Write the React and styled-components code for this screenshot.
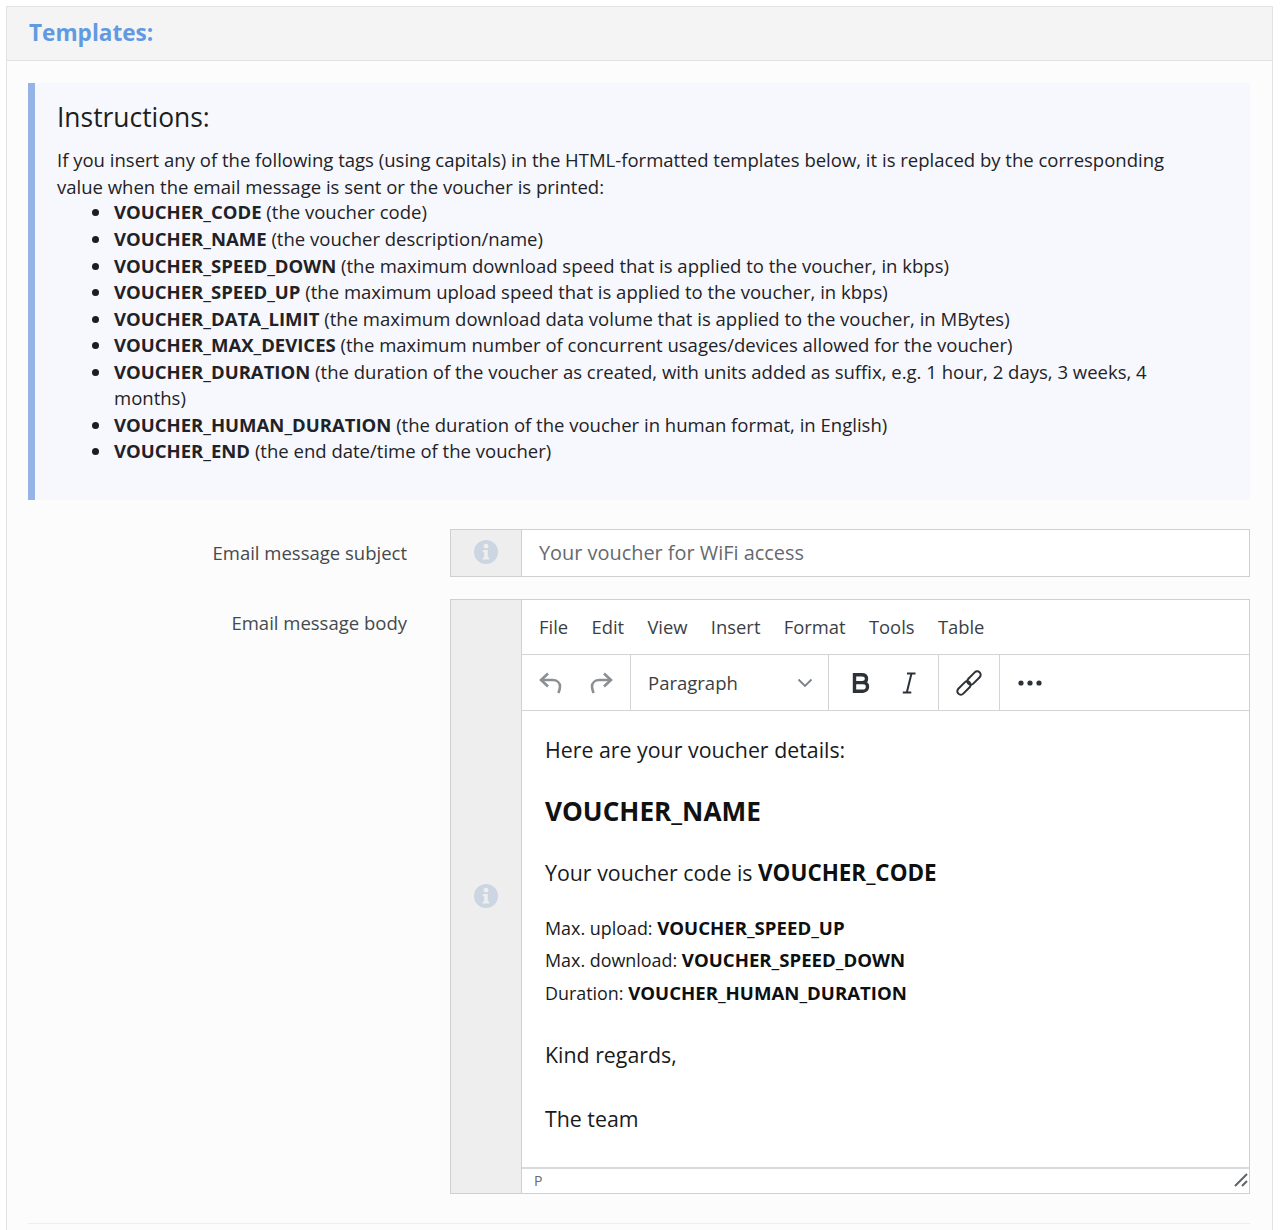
import React from "react";
import styled, { createGlobalStyle } from "styled-components";

const GlobalStyle = createGlobalStyle`
  html, body {
    margin: 0;
    padding: 0;
    background: #fff;
    height: 1230px;
    overflow: hidden;
  }
  body {
    font-family: "Open Sans", "Liberation Sans", sans-serif;
    color: #212529;
  }
`;

const Page = styled.div`
  padding: 6px 7px 0 6px;
`;

const Panel = styled.section`
  height: 1224px;
  box-sizing: border-box;
  border: 1px solid #e3e3e3;
  border-bottom: 0;
  background: #fcfcfc;
`;

const PanelHeader = styled.header`
  height: 54px;
  box-sizing: border-box;
  padding: 0 22px 2px;
  display: flex;
  align-items: center;
  background: #f4f4f4;
  border-bottom: 1px solid #e3e3e3;
  font-size: 22.6px;
  font-weight: 700;
  color: #629ae2;
`;

const PanelBody = styled.div`
  padding: 22px 22px 0 21px;
`;

const Callout = styled.div`
  height: 417px;
  box-sizing: border-box;
  padding: 16px 60px 0 22px;
  background: #f6f8fd;
  border-left: 7px solid #96b3e6;
  font-size: 18.53px;
  line-height: 26.55px;
  color: #1f2226;
`;

const CalloutTitle = styled.h4`
  margin: 0 0 12px;
  font-size: 26.4px;
  line-height: 36px;
  font-weight: 400;
  color: #1b1d20;
`;

const Intro = styled.p`
  margin: 0;
`;

const TagList = styled.ul`
  margin: -0.7px 0 0;
  padding: 0 0 0 57px;
  list-style: none;
`;

const TagItem = styled.li`
  position: relative;

  &::before {
    content: "";
    position: absolute;
    left: -22px;
    top: 10px;
    width: 7px;
    height: 7px;
    border-radius: 50%;
    background: #1b1d20;
  }
`;

const FormRow = styled.div`
  display: flex;
  margin-top: ${(p) => p.$top}px;
`;

const Label = styled.label`
  width: 379px;
  flex: none;
  text-align: right;
  font-size: 18.5px;
  line-height: 26px;
  color: #45494e;
  padding-top: ${(p) => p.$top}px;
`;

const Field = styled.div`
  margin-left: 43px;
  width: 800px;
  flex: none;
  display: flex;
  box-sizing: border-box;
  border: 1px solid #ced0d2;
  height: ${(p) => p.$height}px;
  background: #fff;
`;

const Addon = styled.div`
  width: 70px;
  flex: none;
  box-sizing: content-box;
  display: flex;
  align-items: center;
  justify-content: center;
  padding-bottom: 2px;
  background: #eeeeee;
  border-right: 1px solid #ced0d2;
`;

const SubjectValue = styled.div`
  flex: 1;
  padding-left: 17px;
  font-size: 19.9px;
  line-height: 46px;
  color: #65696e;
`;

const Editor = styled.div`
  flex: 1;
  min-width: 0;
  display: flex;
  flex-direction: column;
`;

const MenuBar = styled.div`
  height: 55px;
  flex: none;
  box-sizing: border-box;
  display: flex;
  align-items: center;
  gap: 23.3px;
  padding: 0 0 2px 17px;
  font-size: 18.4px;
  color: #3a3f45;
  border-bottom: 1px solid #d2d4d6;
`;

const ToolBar = styled.div`
  height: 56px;
  flex: none;
  box-sizing: border-box;
  display: flex;
  border-bottom: 1px solid #d2d4d6;
`;

const ToolGroup = styled.div`
  width: ${(p) => p.$width}px;
  flex: none;
  box-sizing: border-box;
  display: flex;
  align-items: center;
  justify-content: ${(p) => p.$justify || "center"};
  gap: ${(p) => p.$gap || 0}px;
  border-right: ${(p) => (p.$last ? "0" : "1px solid #d2d4d6")};
  padding: ${(p) => p.$padding || "0"};
  font-size: 18.5px;
  color: #3a3f45;
`;

const Content = styled.div`
  flex: 1;
  padding: 24px 0 0 23px;
  font-size: 21.35px;
  color: #181a1c;
`;

const ContentLine = styled.p`
  margin: 0 0 ${(p) => p.$gap}px;
  line-height: 29px;
`;

const ContentHeading = styled.h2`
  margin: 0 0 30px;
  font-size: 26.2px;
  line-height: 34px;
  font-weight: 700;
  color: #111;
`;

const Strong = styled.b`
  font-size: ${(p) => p.$scale || 1.05}em;
  color: #0e0f10;
`;

const SmallLine = styled.div`
  font-size: 17.9px;
  line-height: 32.3px;
`;

const SmallBlock = styled.div`
  margin-bottom: 31px;
`;

const StatusBar = styled.div`
  height: 26px;
  flex: none;
  box-sizing: border-box;
  border-top: 2px solid #d8dadb;
  display: flex;
  align-items: center;
  justify-content: space-between;
  padding: 0 1px 2px 12px;
  font-size: 14px;
  color: #666b70;
`;

const Divider = styled.hr`
  margin: 29px 0 0;
  border: 0;
  border-top: 1px solid #eeeeee;
`;

const InfoIcon = () => (
  <svg width="24" height="24" viewBox="0 0 24 24">
    <circle cx="12" cy="12" r="12" fill="#ccd5e2" />
    <circle cx="12" cy="6.2" r="2.4" fill="#eeeeee" />
    <path d="M8.8 10h5v7.4h1.6v2.2H8.6v-2.2h1.6v-5.2H8.8z" fill="#eeeeee" />
  </svg>
);

const UndoIcon = () => (
  <svg width="26" height="26" viewBox="0 0 26 26" fill="none" stroke="#8b9095" strokeWidth="2.6">
    <path d="M10 3.500 3 10l7 6.500" />
    <path d="M3.500 10h11c4.500 0 7.500 2.800 7.500 6.500 0 2.500-.8 4.500-1.600 6.500" />
  </svg>
);

const RedoIcon = () => (
  <svg width="26" height="26" viewBox="0 0 26 26" fill="none" stroke="#8b9095" strokeWidth="2.6">
    <path d="M16 3.500 23 10l-7 6.500" />
    <path d="M22.500 10h-11C7 10 4 12.800 4 16.500c0 2.500.8 4.500 1.600 6.500" />
  </svg>
);

const Chevron = () => (
  <svg width="16" height="10" viewBox="0 0 16 10" fill="none" stroke="#7d8288" strokeWidth="1.8">
    <path d="M1.500 1.500 8 8l6.500-6.500" />
  </svg>
);

const BoldIcon = () => (
  <svg width="18" height="20" viewBox="0 0 18 20" fill="none" stroke="#2c3238" strokeWidth="3.4">
    <path d="M2.500 1.800h7.300c3 0 4.700 1.500 4.700 3.900s-1.700 3.900-4.700 3.900H2.500zM2.500 9.600h8.300c3 0 4.700 1.600 4.700 4.100s-1.700 4.500-4.700 4.500H2.500z" />
  </svg>
);

const ItalicIcon = () => (
  <svg width="14" height="22" viewBox="0 0 14 22" fill="none" stroke="#2c3238" strokeWidth="2">
    <path d="M5 1.500h8.500M.8 20.500h8.500M9.500 1.500 4.800 20.500" />
  </svg>
);

const LinkIcon = () => (
  <svg width="28" height="28" viewBox="0 0 28 28" fill="none" stroke="#2c3238" strokeWidth="2">
    <rect x="15.500" y="1" width="7" height="16" rx="3.500" transform="rotate(45 19 9)" />
    <rect x="5.500" y="11" width="7" height="16" rx="3.500" transform="rotate(45 9 19)" />
  </svg>
);

const DotsIcon = () => (
  <svg width="24" height="6" viewBox="0 0 24 6" fill="#2c3238">
    <circle cx="3" cy="3" r="2.600" />
    <circle cx="12" cy="3" r="2.600" />
    <circle cx="21" cy="3" r="2.600" />
  </svg>
);

const ResizeGrip = () => (
  <svg width="14" height="14" viewBox="0 0 14 14" stroke="#5f6469" strokeWidth="2">
    <path d="M1 13 13 1M8 13l5-5" />
  </svg>
);

const tags = [
  ["VOUCHER_CODE", "(the voucher code)"],
  ["VOUCHER_NAME", "(the voucher description/name)"],
  ["VOUCHER_SPEED_DOWN", "(the maximum download speed that is applied to the voucher, in kbps)"],
  ["VOUCHER_SPEED_UP", "(the maximum upload speed that is applied to the voucher, in kbps)"],
  ["VOUCHER_DATA_LIMIT", "(the maximum download data volume that is applied to the voucher, in MBytes)"],
  ["VOUCHER_MAX_DEVICES", "(the maximum number of concurrent usages/devices allowed for the voucher)"],
  ["VOUCHER_DURATION", "(the duration of the voucher as created, with units added as suffix, e.g. 1 hour, 2 days, 3 weeks, 4 months)"],
  ["VOUCHER_HUMAN_DURATION", "(the duration of the voucher in human format, in English)"],
  ["VOUCHER_END", "(the end date/time of the voucher)"],
];

const menus = ["File", "Edit", "View", "Insert", "Format", "Tools", "Table"];

export default function App() {
  return (
    <>
      <GlobalStyle />
      <Page>
        <Panel>
          <PanelHeader>Templates:</PanelHeader>
          <PanelBody>
            <Callout>
              <CalloutTitle>Instructions:</CalloutTitle>
              <Intro>
                If you insert any of the following tags (using capitals) in the HTML-formatted templates below, it is
                replaced by the corresponding value when the email message is sent or the voucher is printed:
              </Intro>
              <TagList>
                {tags.map(([tag, text]) => (
                  <TagItem key={tag}>
                    <b>{tag}</b> {text}
                  </TagItem>
                ))}
              </TagList>
            </Callout>

            <FormRow $top={29}>
              <Label $top={11}>Email message subject</Label>
              <Field $height={48}>
                <Addon>
                  <InfoIcon />
                </Addon>
                <SubjectValue>Your voucher for WiFi access</SubjectValue>
              </Field>
            </FormRow>

            <FormRow $top={22}>
              <Label $top={11}>Email message body</Label>
              <Field $height={595}>
                <Addon>
                  <InfoIcon />
                </Addon>
                <Editor>
                  <MenuBar>
                    {menus.map((m) => (
                      <span key={m}>{m}</span>
                    ))}
                  </MenuBar>
                  <ToolBar>
                    <ToolGroup $width={109} $gap={24}>
                      <UndoIcon />
                      <RedoIcon />
                    </ToolGroup>
                    <ToolGroup $width={198} $justify="space-between" $padding="0 15px 0 17px">
                      <span>Paragraph</span>
                      <Chevron />
                    </ToolGroup>
                    <ToolGroup $width={110} $gap={32}>
                      <BoldIcon />
                      <ItalicIcon />
                    </ToolGroup>
                    <ToolGroup $width={61}>
                      <LinkIcon />
                    </ToolGroup>
                    <ToolGroup $width={60} $last>
                      <DotsIcon />
                    </ToolGroup>
                  </ToolBar>
                  <Content>
                    <ContentLine $gap={30}>Here are your voucher details:</ContentLine>
                    <ContentHeading>VOUCHER_NAME</ContentHeading>
                    <ContentLine $gap={25}>
                      Your voucher code is <Strong>VOUCHER_CODE</Strong>
                    </ContentLine>
                    <SmallBlock>
                      <SmallLine>
                        Max. upload: <Strong $scale={1.04}>VOUCHER_SPEED_UP</Strong>
                      </SmallLine>
                      <SmallLine>
                        Max. download: <Strong $scale={1.04}>VOUCHER_SPEED_DOWN</Strong>
                      </SmallLine>
                      <SmallLine>
                        Duration: <Strong $scale={1.04}>VOUCHER_HUMAN_DURATION</Strong>
                      </SmallLine>
                    </SmallBlock>
                    <ContentLine $gap={35}>Kind regards,</ContentLine>
                    <ContentLine $gap={0}>The team</ContentLine>
                  </Content>
                  <StatusBar>
                    <span>P</span>
                    <ResizeGrip />
                  </StatusBar>
                </Editor>
              </Field>
            </FormRow>
            <Divider />
          </PanelBody>
        </Panel>
      </Page>
    </>
  );
}
